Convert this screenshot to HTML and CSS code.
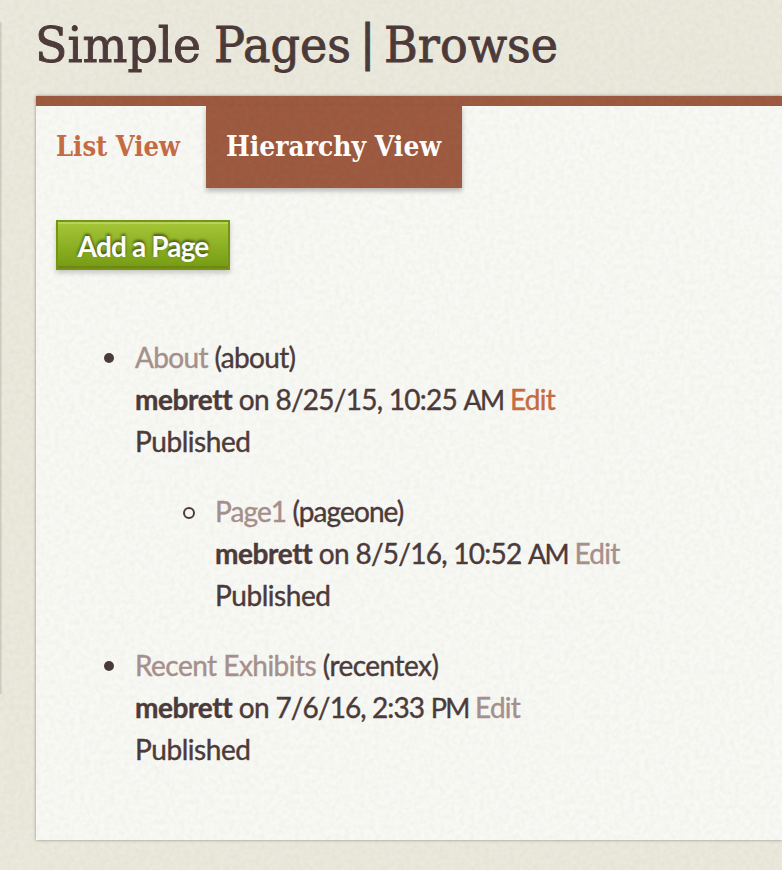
FILE: index.html
```html
<!DOCTYPE html>
<html lang="en">
<head>
<meta charset="utf-8">
<title>Simple Pages | Browse</title>
<link rel="stylesheet" href="styles.css">
</head>
<body>
<svg class="paper" width="782" height="870" aria-hidden="true"><filter id="grain" x="0" y="0" width="100%" height="100%"><feTurbulence type="fractalNoise" baseFrequency=".2" numOctaves="3" seed="4"/><feColorMatrix values="0 0 0 0 .35  0 0 0 0 .35  0 0 0 0 .2  .5 0 0 0 -.16"/></filter><rect width="782" height="870" filter="url(#grain)"/></svg>
<div class="sidebar-edge"></div>
<main>
<h1><svg width="530" height="70"><text y="46"><tspan x="-1" textLength="166" lengthAdjust="spacingAndGlyphs">Simple</tspan> <tspan x="178" textLength="137" lengthAdjust="spacingAndGlyphs">Pages</tspan> <tspan class="bar" x="323.5" y="44">|</tspan> <tspan x="348" y="46" textLength="174" lengthAdjust="spacingAndGlyphs">Browse</tspan></text></svg></h1>
<section class="panel">
<nav><a class="tab list" href="#"><svg width="124" height="40"><text x="0" y="27" textLength="124" lengthAdjust="spacingAndGlyphs">List View</text></svg></a><a class="tab active" href="#"><svg width="216" height="40"><text x="0" y="27" textLength="215" lengthAdjust="spacingAndGlyphs">Hierarchy View</text></svg></a></nav>
<a class="add" href="#">Add a Page</a>
<ul class="pages">
<li><div class="line"><a href="#">About</a> (about)</div><div class="line"><b>mebrett</b> on <span>8/25/15, 10:25</span> <i>AM</i> <a class="hot" href="#">Edit</a></div><div class="line pub">Published</div>
<ul><li><div class="line b1"><a href="#">Page1</a> (pageone)</div><div class="line"><b>mebrett</b> on <span>8/5/16, 10:52</span> <i>AM</i> <a href="#">Edit</a></div><div class="line pub">Published</div></li></ul></li>
<li><div class="line c1"><a href="#">Recent Exhibits</a> (recentex)</div><div class="line c2"><b>mebrett</b> on <span>7/6/16, 2:33</span> <i>PM</i> <a href="#">Edit</a></div><div class="line pub">Published</div></li>
</ul>
</section>
</main>
</body>
</html>
```
FILE: styles.css
```css
*,*::before{box-sizing:border-box}
body{margin:0;height:870px;overflow:hidden;background:#ebe9dd;color:#4a3838;font:28px/42px Lato,sans-serif;display:flex}
.paper{position:absolute;inset:0;z-index:1;pointer-events:none;opacity:.3}
.sidebar-edge{width:2px;height:672px;margin-top:22px;background:linear-gradient(90deg,#c9c6bb,#e0ddd1)}
main{margin-left:34px;width:746px}
h1{margin:0;height:96px;padding-top:16px;font:400 49px "DejaVu Serif",serif}
h1 text{stroke:#4a3838;stroke-width:.9px}
h1 .bar{font-size:48px}
svg{display:block;overflow:visible;fill:currentColor}
.panel{height:744px;border-top:10px solid #9c583e;background:#f8f9f5;box-shadow:0 0 3px #0006}
nav{display:flex;height:82px;font:700 27px "DejaVu Serif",serif}
.tab{padding:23px 20px;height:82px;color:#c76941}
.list{width:170px}
.active{width:256px;background:#9c583e;color:#fff;box-shadow:0 3px 5px #0004}
a{text-decoration:none;color:#a68f8c}
.add{display:block;width:174px;height:50px;margin:32px 0 0 20px;border:2px solid #749510;background:linear-gradient(#a6c836,#749b10);color:#fff;font-weight:700;line-height:48px;text-align:center;box-shadow:0 3px 5px #0003,inset 0 2px #b8d45d,inset 0 -2px #6c8716;letter-spacing:-.85px;text-shadow:0 -2px 3px #0009}
.pages{margin:66px 0 0;padding:0 0 0 99px;list-style:none}
.pages li{position:relative}
.pages li::before{content:"";position:absolute;left:-31px;top:17px;width:10px;height:10px;border-radius:50%;background:#4a3838}
ul ul{margin:28px 0;padding-left:80px;list-style:none}
.pages ul li::before{left:-32px;top:17px;width:12px;height:12px;border:2px solid #4a3838;background:none}
.line{height:42px;white-space:nowrap;letter-spacing:-.65px;-webkit-text-stroke:.4px currentColor}
.line b{letter-spacing:-.4px}
.line span{letter-spacing:-.75px}
.line i{font-style:normal;font-size:27px;line-height:1;letter-spacing:-1.7px}
.line i + a{letter-spacing:-.75px}
.pub{letter-spacing:-.45px}
.b1{letter-spacing:-.9px}
.c1{letter-spacing:-.53px}
.c2 span{letter-spacing:-.9px}
.line .hot,.hot{color:#c76941}
```
